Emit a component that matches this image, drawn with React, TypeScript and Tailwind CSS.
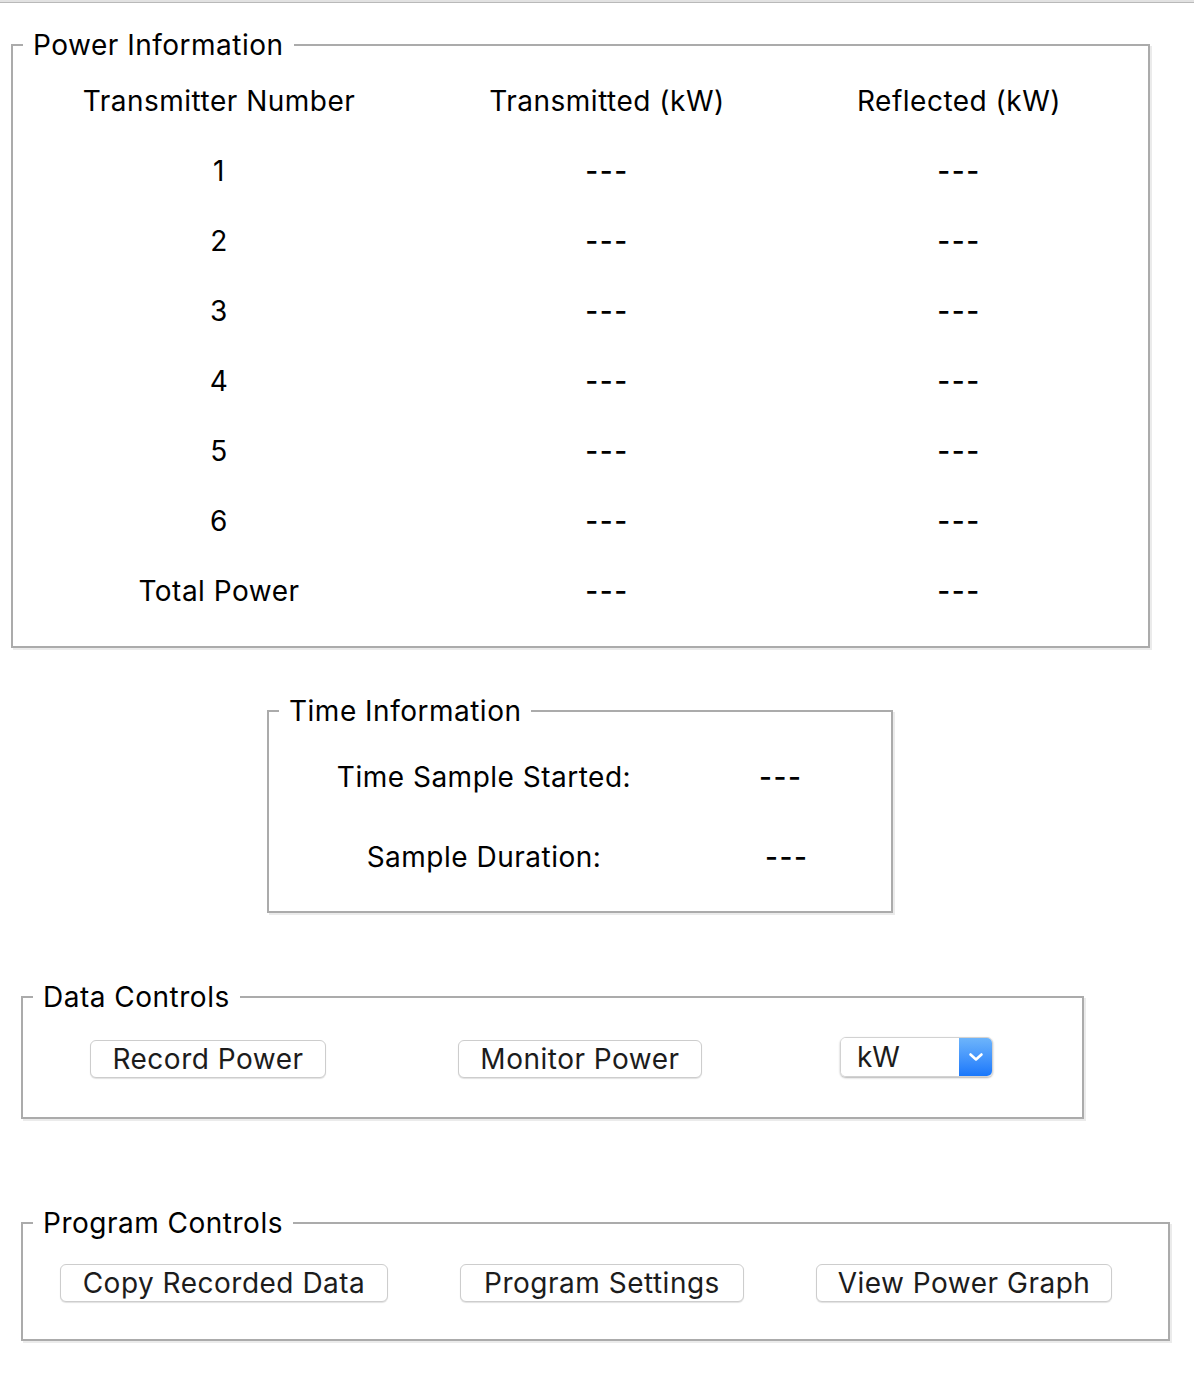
import React from "react";

const font = { fontFamily: "Inter, 'Noto Sans', 'Liberation Sans', sans-serif" };

// titled etched border, like a Swing TitledBorder
const TitledBox = ({
  title,
  className,
  children,
}: {
  title: string;
  className: string;
  children: React.ReactNode;
}) => (
  <fieldset
    className={`border-2 border-[#ababab] shadow-[2px_2px_0_#ebebeb] p-0 m-0 min-w-0 ${className}`}
  >
    <legend className="ml-[10px] px-[10px] text-[28px] leading-[32px] tracking-[0.5px] text-black">{title}</legend>
    {children}
  </fieldset>
);

const Button = ({ label, w }: { label: string; w: string }) => (
  <button
    className={`${w} h-[38px] bg-white border border-[#cdcdcd] rounded-[6px] shadow-[0_1px_1px_rgba(0,0,0,0.12)] text-[28px] leading-[36px] tracking-[0.5px] text-[#1c1c1c] flex items-center justify-center`}
  >
    {label}
  </button>
);

const rows = ["1", "2", "3", "4", "5", "6", "Total Power"];

export default function App() {
  return (
    <div className="w-[1194px] h-[1400px] bg-white" style={font}>
      <div className="h-[3px] bg-[#e2e2e2] border-b border-[#b9b9b9]" />

      {/* Power Information */}
      <TitledBox title="Power Information" className="mt-[26px] ml-[11px] w-[1139px] pb-[20px]">
        <div className="pt-[5px] grid grid-cols-[412px_364px_340px] text-[28px] tracking-[0.5px] text-black">
          <div className="h-[70px] flex items-center justify-center">Transmitter Number</div>
          <div className="h-[70px] flex items-center justify-center">Transmitted (kW)</div>
          <div className="h-[70px] flex items-center justify-center">Reflected (kW)</div>
          {rows.map((r) => (
            <React.Fragment key={r}>
              <div className="h-[70px] flex items-center justify-center">{r}</div>
              <div className="h-[70px] flex items-center justify-center tracking-[1.5px] font-medium">---</div>
              <div className="h-[70px] flex items-center justify-center tracking-[1.5px] font-medium">---</div>
            </React.Fragment>
          ))}
        </div>
      </TitledBox>

      {/* Time Information */}
      <TitledBox title="Time Information" className="mt-[47px] ml-[267px] w-[626px] pb-[14px]">
        <div className="pt-[10px] grid grid-cols-[430px_164px] text-[28px] tracking-[0.5px] text-black">
          <div className="h-[80px] flex items-center justify-center">Time Sample Started:</div>
          <div className="h-[80px] flex items-center pl-[60px] tracking-[1.5px] font-medium">---</div>
          <div className="h-[80px] flex items-center justify-center">Sample Duration:</div>
          <div className="h-[80px] flex items-center pl-[66px] tracking-[1.5px] font-medium">---</div>
        </div>
      </TitledBox>

      {/* Data Controls */}
      <TitledBox title="Data Controls" className="mt-[68px] ml-[21px] w-[1063px] pb-[39px]">
        <div className="pt-[27px] pl-[67px] flex items-center">
          <Button label="Record Power" w="w-[236px]" />
          <div className="ml-[132px]">
            <Button label="Monitor Power" w="w-[244px]" />
          </div>
          <div className="ml-[138px] -mt-[5px] flex w-[153px] h-[40px] rounded-[6px] shadow-[0_1px_2px_rgba(0,0,0,0.3)] border border-[#d2d2d2] overflow-hidden">
            <div className="flex-1 bg-white flex items-center pl-[16px] text-[28px] text-[#1c1c1c]">kW</div>
            <div className="w-[33px] bg-gradient-to-b from-[#6db4fb] to-[#1877fb] flex items-center justify-center">
              <svg width="16" height="12" viewBox="0 0 16 12" fill="none">
                <path d="M2.5 3.5 L8 8.5 L13.5 3.5" stroke="white" strokeWidth="2.6" strokeLinecap="round" strokeLinejoin="round" />
              </svg>
            </div>
          </div>
        </div>
      </TitledBox>

      {/* Program Controls */}
      <TitledBox title="Program Controls" className="mt-[88px] ml-[21px] w-[1149px] pb-[37px]">
        <div className="pt-[25px] pl-[37px] flex items-center gap-[72px]">
          <Button label="Copy Recorded Data" w="w-[328px]" />
          <Button label="Program Settings" w="w-[284px]" />
          <Button label="View Power Graph" w="w-[296px]" />
        </div>
      </TitledBox>
    </div>
  );
}
